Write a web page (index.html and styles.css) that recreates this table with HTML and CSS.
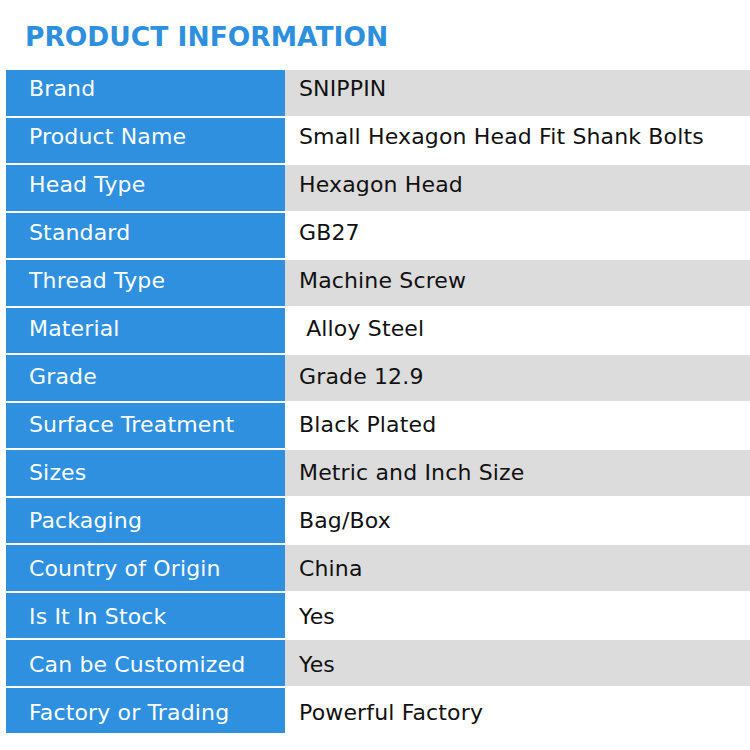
FILE: index.html
```html
<!DOCTYPE html>
<html>
<head>
<meta charset="utf-8">
<link rel="stylesheet" href="styles.css">
</head>
<body>
<h1 class="title">PRODUCT INFORMATION</h1>
<div class="specs">
  <div class="row"><div class="key">Brand</div><div class="val">SNIPPIN</div></div>
  <div class="row"><div class="key">Product Name</div><div class="val">Small Hexagon Head Fit Shank Bolts</div></div>
  <div class="row"><div class="key">Head Type</div><div class="val">Hexagon Head</div></div>
  <div class="row"><div class="key">Standard</div><div class="val">GB27</div></div>
  <div class="row"><div class="key">Thread Type</div><div class="val">Machine Screw</div></div>
  <div class="row"><div class="key">Material</div><div class="val"> Alloy Steel</div></div>
  <div class="row"><div class="key">Grade</div><div class="val">Grade 12.9</div></div>
  <div class="row"><div class="key">Surface Treatment</div><div class="val">Black Plated</div></div>
  <div class="row"><div class="key">Sizes</div><div class="val">Metric and Inch Size</div></div>
  <div class="row"><div class="key">Packaging</div><div class="val">Bag/Box</div></div>
  <div class="row"><div class="key">Country of Origin</div><div class="val">China</div></div>
  <div class="row"><div class="key">Is It In Stock</div><div class="val">Yes</div></div>
  <div class="row"><div class="key">Can be Customized</div><div class="val">Yes</div></div>
  <div class="row"><div class="key">Factory or Trading</div><div class="val">Powerful Factory</div></div>
</div>
</body>
</html>
```
FILE: styles.css
```css
html, body {
  margin: 0;
  padding: 0;
  background: #fff;
}
body {
  font-family: "DejaVu Sans", Verdana, sans-serif;
  width: 750px;
  overflow: hidden;
}
.title {
  margin: 0;
  padding: 22px 0 0 25px;
  height: 48px;
  box-sizing: border-box;
  font-size: 26.5px;
  line-height: 30px;
  font-weight: bold;
  color: #2e8fdd;
}
.specs {
  margin: 22px 0 0 6px;
  display: flex;
  flex-direction: column;
  gap: 2px;
}
.row {
  display: grid;
  grid-template-columns: 279px 1fr;
  height: 45.5px;
}
.key,
.val {
  font-size: 22px;
  line-height: 26px;
  letter-spacing: 0.15px;
  padding-top: 5.5px;
  box-sizing: border-box;
  white-space: pre;
}
.key {
  background: #2e90de;
  color: #fff;
  padding-left: 23px;
}
.val {
  color: #111;
  padding-left: 14px;
}
.row:nth-child(odd) .val {
  background: #dcdcdc;
}
.row:nth-child(2) > div { padding-top: 6px; }
.row:nth-child(3) > div { padding-top: 6.5px; }
.row:nth-child(4) > div { padding-top: 7px; }
.row:nth-child(5) > div { padding-top: 7.5px; }
.row:nth-child(6) > div { padding-top: 8px; }
.row:nth-child(7) > div { padding-top: 8.5px; }
.row:nth-child(8) > div { padding-top: 9px; }
.row:nth-child(9) > div { padding-top: 9.5px; }
.row:nth-child(10) > div { padding-top: 10px; }
.row:nth-child(11) > div { padding-top: 10.5px; }
.row:nth-child(12) > div { padding-top: 11px; }
.row:nth-child(13) > div { padding-top: 11.5px; }
.row:nth-child(14) > div { padding-top: 12px; }
```
